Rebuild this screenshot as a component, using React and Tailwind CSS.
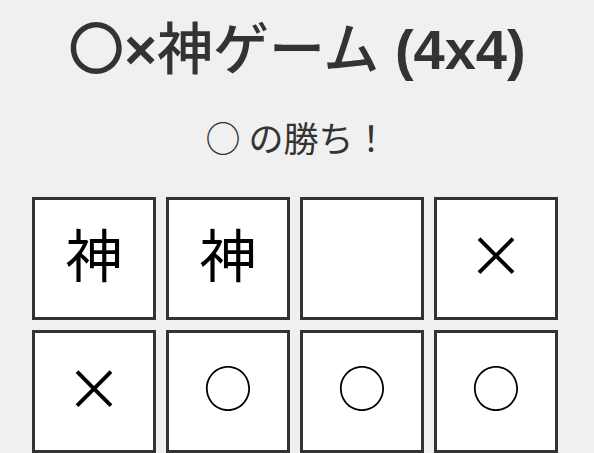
export default function App() {
  const cells = ["神", "神", "", "×", "×", "○", "○", "○", "", "", "", "", "", "", "", ""];
  return (
    <div className="min-h-screen overflow-hidden bg-[#f0f0f0] pt-[15px] text-[#333] font-[family-name:Liberation_Sans,Noto_Sans_CJK_JP,sans-serif]">
      <h1 className="h-[60px] text-center text-[56px] font-bold leading-[60px]">
        <span className="font-medium font-[family-name:Noto_Sans_CJK_JP,sans-serif]">〇</span>×<span className="font-medium font-[family-name:Noto_Sans_CJK_JP,sans-serif]">神ゲーム</span> (4x4)
      </h1>
      <p className="mt-[42px] h-[40px] text-center text-[35px] leading-[40px] font-[family-name:Noto_Sans_CJK_JP,sans-serif]">○ の勝ち！</p>
      <div className="ml-[32px] mt-[40px] grid grid-cols-[repeat(4,124px)] gap-[10px]">
        {cells.map((c, i) => (
          <div
            key={i}
            className="flex h-[123px] items-center justify-center border-[3px] border-[#333] bg-white pb-[12px] text-[57px] leading-none text-black font-[family-name:Noto_Sans_CJK_JP,sans-serif]"
          >
            {c === "○" ? <span className="text-[49px]">○</span> : c}
          </div>
        ))}
      </div>
    </div>
  );
}
